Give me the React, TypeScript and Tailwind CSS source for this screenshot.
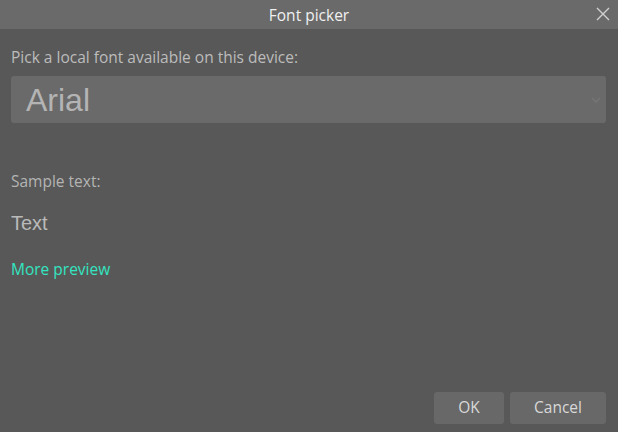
import React from "react";

export default function App() {
  const ui = { fontFamily: '"Open Sans", "Noto Sans", sans-serif' };
  return (
    <div className="w-[618px] h-[432px] bg-[#585858] flex flex-col overflow-hidden" style={ui}>
      <div className="h-[29px] bg-[#6a6a6a] flex items-center justify-center relative shrink-0">
        <span className="text-[15.5px] leading-[22px] text-[#f0f0f0]">Font picker</span>
        <button className="absolute right-[5px] top-[4px] w-[20px] h-[20px] flex items-center justify-center">
          <svg width="14" height="14" viewBox="0 0 14 14">
            <path d="M1 1L13 13M13 1L1 13" stroke="#d0d0d0" strokeWidth="1.4" />
          </svg>
        </button>
      </div>
      <div className="flex-1 flex flex-col pl-[11px] pr-[12px] pt-[17px]">
        <div className="text-[15.5px] text-[#bcbcbc] leading-[22px]">Pick a local font available on this device:</div>
        <div className="mt-[8px] h-[47px] bg-[#6a6a6a] rounded-[3px] flex items-center pl-[15px] pr-[5px]">
          <span className="flex-1 text-[32px] leading-[36px] text-[#b4b4b4]" style={{ fontFamily: '"Liberation Sans", Arial, sans-serif' }}>Arial</span>
          <svg width="10" height="8" viewBox="0 0 10 8">
            <path d="M1 2L5 6L9 2" stroke="#767676" strokeWidth="1.3" fill="none" />
          </svg>
        </div>
        <div className="mt-[47px] text-[15.5px] text-[#b4b4b4] leading-[22px]">Sample text:</div>
        <div className="mt-[19px] text-[20px] text-[#bababa] leading-[24px]" style={{ fontFamily: '"Liberation Sans", Arial, sans-serif' }}>Text</div>
        <div className="mt-[23px] text-[15.5px] text-[#33e5c0] leading-[22px]">More preview</div>
        <div className="flex-1" />
        <div className="flex justify-end gap-[6px] pb-[8px]">
          <button className="w-[70px] h-[32px] bg-[#686868] rounded-[3px] text-[15.5px] text-[#d8d8d8]">OK</button>
          <button className="w-[96px] h-[32px] bg-[#686868] rounded-[3px] text-[15.5px] text-[#d8d8d8]">Cancel</button>
        </div>
      </div>
    </div>
  );
}
